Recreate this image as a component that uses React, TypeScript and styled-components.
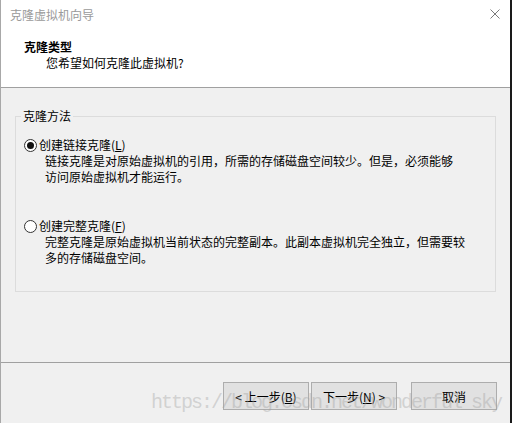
import React, { useState } from 'react';
import styled, { createGlobalStyle } from 'styled-components';

const GlobalStyle = createGlobalStyle`
  html, body {
    margin: 0;
    padding: 0;
    background: #ffffff;
  }
  body {
    font-family: "Noto Sans CJK SC", "Liberation Sans", sans-serif;
    font-size: 12px;
    color: #000;
  }
`;

const Window = styled.div`
  position: relative;
  width: 509px;
  height: 423px;
  border-left: 1px solid #a8a8a8;
  border-right: 2px solid #1a1a1a;
  display: flex;
  flex-direction: column;
  background: #f0f0f0;
  overflow: hidden;
`;

const TopArea = styled.div`
  background: #ffffff;
  height: 87px;
  border-bottom: 1px solid #a0a0a0;
  display: flex;
  flex-direction: column;
`;

const TitleBar = styled.div`
  height: 28px;
  display: flex;
  align-items: center;
  justify-content: space-between;
  padding: 0 10px 0 9px;
  color: #9a9a9a;
  font-size: 12px;
`;

const CloseButton = styled.div`
  width: 10px;
  height: 10px;
  display: flex;
`;

const Header = styled.div`
  padding: 11px 0 0 23px;
  display: flex;
  flex-direction: column;
`;

const HeaderTitle = styled.div`
  font-weight: bold;
  line-height: 16px;
`;

const HeaderSub = styled.div`
  padding-left: 22px;
  line-height: 16px;
`;

const Body = styled.div`
  padding: 28px 14px 0 14px;
  display: flex;
  flex-direction: column;
`;

const GroupBox = styled.div`
  position: relative;
  height: 176px;
  box-sizing: border-box;
  border: 1px solid #dcdcdc;
  padding: 20px 8px 0 8px;
  display: flex;
  flex-direction: column;
  gap: 33px;
`;

const GroupLabel = styled.span`
  position: absolute;
  top: -9px;
  left: 5px;
  padding: 0 2px;
  line-height: 16px;
  background: #f0f0f0;
`;

const OptionBlock = styled.div`
  display: flex;
  flex-direction: column;
`;

const OptionRow = styled.label`
  display: flex;
  align-items: center;
  gap: 2px;
  line-height: 16px;
  cursor: default;
`;

const RadioCircle = styled.span<{ checked: boolean }>`
  width: 11px;
  height: 11px;
  border: 1px solid #333333;
  border-radius: 50%;
  background: #ffffff;
  display: flex;
  align-items: center;
  justify-content: center;
  &::after {
    content: '';
    width: 7px;
    height: 7px;
    border-radius: 50%;
    background: ${({ checked }) => (checked ? '#111111' : 'transparent')};
  }
`;

const Mnemonic = styled.span`
  text-decoration: underline;
`;

const Description = styled.div`
  padding-left: 21px;
  line-height: 16px;
  width: 420px;
`;

const Separator = styled.div`
  margin-top: 70px;
  height: 1px;
  background: #a0a0a0;
`;

const ButtonRow = styled.div`
  display: flex;
  justify-content: flex-end;
  padding: 19px 13px 0 0;
`;

const DialogButton = styled.button<{ spaced?: boolean }>`
  width: 86px;
  height: 28px;
  margin-left: ${({ spaced }) => (spaced ? '14px' : '2px')};
  background: #e1e1e1;
  border: 1px solid #adadad;
  font-family: "Noto Sans CJK SC", "Liberation Sans", sans-serif;
  font-size: 12px;
  color: #000;
  padding: 0;
`;

const Watermark = styled.div`
  position: absolute;
  left: 150px;
  top: 391px;
  font-family: "Liberation Mono", "DejaVu Sans Mono", monospace;
  font-size: 20px;
  letter-spacing: -2px;
  color: rgba(160, 160, 160, 0.4);
  pointer-events: none;
  white-space: nowrap;
`;

const options = [
  {
    id: 'linked',
    label: '创建链接克隆',
    key: 'L',
    lines: ['链接克隆是对原始虚拟机的引用，所需的存储磁盘空间较少。但是，必须能够', '访问原始虚拟机才能运行。'],
  },
  {
    id: 'full',
    label: '创建完整克隆',
    key: 'F',
    lines: ['完整克隆是原始虚拟机当前状态的完整副本。此副本虚拟机完全独立，但需要较', '多的存储磁盘空间。'],
  },
];

const App: React.FC = () => {
  const [selected, setSelected] = useState('linked');

  return (
    <>
      <GlobalStyle />
      <Window>
        <TopArea>
          <TitleBar>
            <span>克隆虚拟机向导</span>
            <CloseButton>
              <svg width="10" height="10" viewBox="0 0 10 10">
                <path d="M0.5 0.5 L9.5 9.5 M9.5 0.5 L0.5 9.5" stroke="#7a7a7a" strokeWidth="1" />
              </svg>
            </CloseButton>
          </TitleBar>
          <Header>
            <HeaderTitle>克隆类型</HeaderTitle>
            <HeaderSub>您希望如何克隆此虚拟机?</HeaderSub>
          </Header>
        </TopArea>
        <Body>
          <GroupBox>
            <GroupLabel>克隆方法</GroupLabel>
            {options.map((opt) => (
              <OptionBlock key={opt.id} onClick={() => setSelected(opt.id)}>
                <OptionRow>
                  <RadioCircle checked={selected === opt.id} />
                  <span>
                    {opt.label}(<Mnemonic>{opt.key}</Mnemonic>)
                  </span>
                </OptionRow>
                {opt.lines.map((line) => (
                  <Description key={line}>{line}</Description>
                ))}
              </OptionBlock>
            ))}
          </GroupBox>
        </Body>
        <Separator />
        <ButtonRow>
          <DialogButton>&lt; 上一步(<Mnemonic>B</Mnemonic>)</DialogButton>
          <DialogButton>下一步(<Mnemonic>N</Mnemonic>) &gt;</DialogButton>
          <DialogButton spaced>取消</DialogButton>
        </ButtonRow>
        <Watermark>https://blog.csdn.net/wonderful_sky</Watermark>
      </Window>
    </>
  );
};

export default App;
